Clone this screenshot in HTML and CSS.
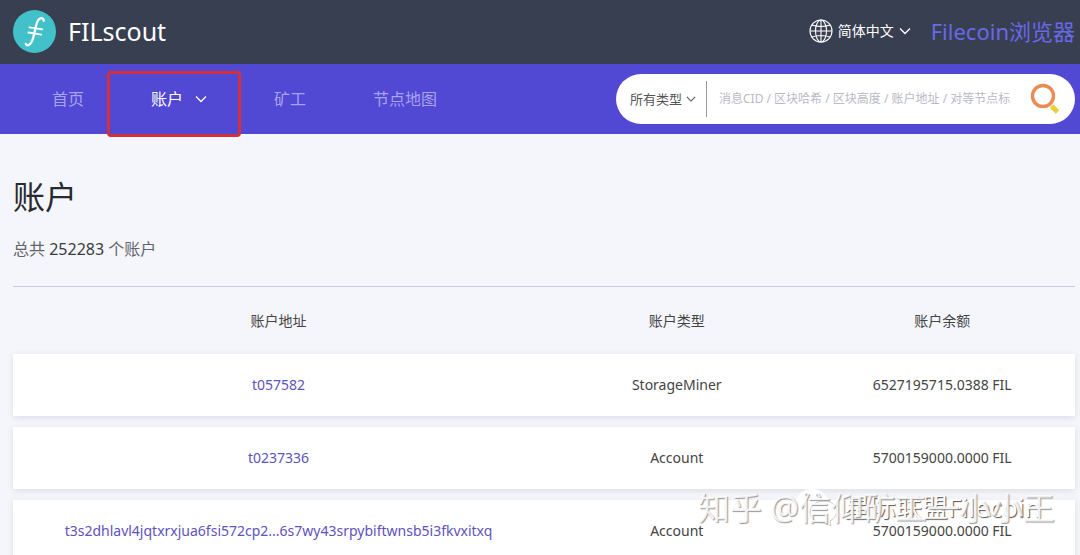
FILE: index.html
```html
<!DOCTYPE html>
<html lang="zh-CN">
<head>
<meta charset="utf-8">
<meta name="viewport" content="width=device-width, initial-scale=1">
<title>FILscout - 账户</title>
<link rel="stylesheet" href="styles.css">
</head>
<body>
<header class="topbar">
  <a class="brand" href="#">
    <svg class="brand-logo" viewBox="0 0 42 42" aria-hidden="true">
      <circle cx="21" cy="21" r="21" fill="#42c1ca"/>
      <g fill="none" stroke="#fff" stroke-linecap="round">
        <path stroke-width="2.200" d="M30 10.500C30 7 25.500 6.500 23.500 12C22 17 20.800 23 19.500 28C17.500 34.500 13.500 36 12.500 33"/>
        <path stroke-width="1.800" d="M16 17L28.500 19M15 22L27.500 24"/>
      </g>
    </svg>
    <span>FILscout</span>
  </a>
  <div class="top-actions">
    <button class="language" type="button">
      <svg class="globe" viewBox="0 0 24 24" aria-hidden="true">
        <g fill="none" stroke="currentColor" stroke-width="1.100">
          <circle cx="12" cy="12" r="11"/><ellipse cx="12" cy="12" rx="5.500" ry="11"/>
          <path d="M12 1V23M1 12H23M3 6Q12 9 21 6M3 18Q12 15 21 18"/>
        </g>
      </svg>
      <span>简体中文</span>
      <svg class="chevron" viewBox="0 0 12 8" aria-hidden="true"><path d="M1 1.500L6 6.500L11 1.500"/></svg>
    </button>
    <a class="explorer" href="#">Filecoin浏览器</a>
  </div>
</header>
<div class="navbar">
  <nav class="menu">
    <a href="#">首页</a>
    <a class="active" href="#">账户 <svg class="chevron" viewBox="0 0 12 8" aria-hidden="true"><path d="M1 1.500L6 6.500L11 1.500"/></svg></a>
    <a href="#">矿工</a>
    <a href="#">节点地图</a>
  </nav>
  <form class="search">
    <div class="type">
      <select aria-label="搜索类型"><option>所有类型</option></select>
      <svg class="chevron" viewBox="0 0 12 8" aria-hidden="true"><path d="M1 1.500L6 6.500L11 1.500"/></svg>
    </div>
    <input type="text" aria-label="搜索" placeholder="消息CID / 区块哈希 / 区块高度 / 账户地址 / 对等节点标">
    <button class="search-button" type="button" aria-label="搜索">
      <svg viewBox="0 0 30 32" aria-hidden="true">
        <circle cx="13" cy="13" r="10.500" fill="none" stroke="#e98b52" stroke-width="3.400"/>
        <path d="M21.500 23L27.500 29" stroke="#e8cf3c" stroke-width="5"/>
      </svg>
    </button>
  </form>
</div>
<main class="page">
  <h1>账户</h1>
  <p class="total">总共 <strong>252283</strong> 个账户</p>
  <table class="accounts">
    <thead><tr><th class="address">账户地址</th><th>账户类型</th><th>账户余额</th></tr></thead>
    <tbody>
      <tr><td><a href="#">t057582</a></td><td>StorageMiner</td><td>6527195715.0388 FIL</td></tr>
      <tr><td><a href="#">t0237336</a></td><td>Account</td><td>5700159000.0000 FIL</td></tr>
      <tr><td><a href="#">t3s2dhlavl4jqtxrxjua6fsi572cp2...6s7wy43srpybiftwnsb5i3fkvxitxq</a></td><td>Account</td><td>5700159000.0000 FIL</td></tr>
    </tbody>
  </table>
</main>
<div class="highlight"></div>
<div class="watermark account">
  <svg viewBox="0 0 44 38" aria-hidden="true">
    <path d="M17 1C8 1 1 7 1 15c0 5 3 9 7 11l-2 6 7-4c10 2 20-4 20-13C33 7 26 1 17 1z" fill="#fff"/>
    <path d="M29 13c-8 0-14 5-14 11s6 11 14 11l7 3-1-5c11-6 8-20-6-20z" fill="#fff" stroke="#ccc"/>
    <g fill="#777"><circle cx="12" cy="7" r="1.500"/><circle cx="23" cy="7" r="1.500"/></g>
  </svg>
  <span>星际联盟Filecoin</span>
</div>
<div class="watermark author">知乎 @信仰矿工一小小王</div>
</body>
</html>
```
FILE: styles.css
```css
* { box-sizing: border-box; }
body {
  margin: 0;
  height: 100vh;
  overflow: hidden;
  position: relative;
  background: #f5f6fb;
  color: #444;
  font: 14px/20px "Noto Sans", "Noto Sans CJK SC", sans-serif;
}
a { color: inherit; text-decoration: none; }
button, input, select { border: 0; padding: 0; background: none; font: inherit; color: inherit; }
.chevron { width: 12px; height: 8px; flex: none; fill: none; stroke: currentColor; stroke-width: 1.3; }
.topbar {
  display: flex; align-items: center; justify-content: space-between;
  height: 64px; padding: 0 5px 2px 13px; background: #373f50; color: #fff;
}
.brand { display: flex; align-items: center; gap: 12px; font-size: 25px; line-height: 32px; }
.brand-logo { width: 43px; height: 43px; }
.top-actions { display: flex; align-items: center; gap: 20px; }
.language { display: flex; align-items: center; gap: 5px; }
.globe { width: 24px; height: 24px; }
.explorer { color: #6968e8; font-size: 22px; line-height: 32px; }
.navbar {
  display: flex; align-items: center; justify-content: space-between;
  height: 70px; padding: 0 5px 0 52px; background: #5148d3;
}
.menu { display: flex; align-items: center; gap: 67px; color: #a8a2f0; font-size: 16px; }
.menu .active { display: flex; align-items: center; gap: 12px; color: #fff; }
.search {
  display: flex; align-items: center; width: 459px; height: 50px;
  padding: 0 15px 0 14px; border-radius: 25px; background: #fff;
}
.type {
  display: flex; align-items: center; height: 36px; padding-right: 10px;
  gap: 3px; border-right: 1px solid #999; font-size: 13px; color: #555;
}
.type .chevron { width: 10px; }
.type select { appearance: none; }
.search input { flex: 1; min-width: 0; margin: 0 8px 0 12px; font-size: 12px; }
.search input::placeholder { color: #b9bac5; opacity: 1; }
.search-button svg { display: block; width: 30px; height: 32px; }
.page { padding: 40px 5px 0 13px; }
h1 { margin: 0; font-size: 32px; line-height: 46px; font-weight: 400; color: #282a2e; }
.total { margin: 0; padding: 18px 0 26px; border-bottom: 1px solid #cbccd3; font-size: 16px; line-height: 22px; color: #63656b; }
.total strong { font-weight: 400; color: #3b3c42; }
.accounts { width: 100%; table-layout: fixed; border-collapse: separate; border-spacing: 0 11px; }
.accounts .address { width: 50%; }
.accounts th { height: 45px; padding: 0; font-weight: 400; color: #444; }
.accounts td { height: 62px; padding: 0; text-align: center; background: #fff; }
.accounts tbody tr { box-shadow: 0 2px 6px #dcdde6; border-radius: 3px; }
.accounts td a { color: #6052bd; }
.highlight { position: absolute; left: 107px; top: 71px; width: 134px; height: 66px; border: 3px solid #d42f3d; border-radius: 4px; }
.watermark { position: absolute; line-height: 36px; white-space: nowrap; }
.author { left: 698px; top: 490px; font-size: 32px; color: rgba(255, 255, 255, 0.85); text-shadow: 1px 1px 1px #999; }
.account { display: flex; align-items: center; gap: 5px; left: 795px; top: 488px; font-size: 26px; color: #fff; text-shadow: 1px 1px 1px #555; }
.account svg { width: 44px; height: 38px; }
```
